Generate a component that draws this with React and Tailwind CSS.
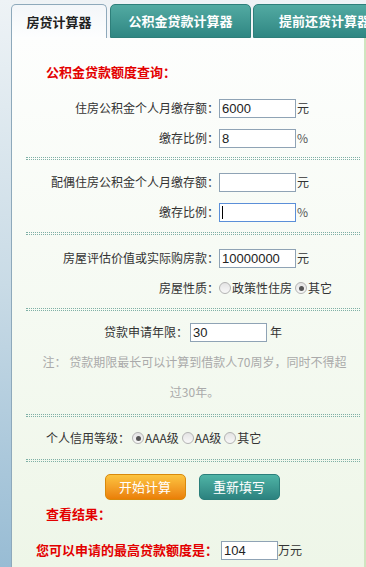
const FONT = { fontFamily: '"Noto Sans CJK SC", "Liberation Sans", sans-serif' };

function Box({ value, w = "w-[77px]", focused }) {
  return (
    <div
      className={`relative h-[19px] ${w} border bg-white px-[2px] text-[13px] leading-[17px] text-[#222] ${
        focused ? "border-[#5b8fd8]" : "border-[#8fa3b5]"
      }`}
      style={{ fontFamily: '"Liberation Sans", Arial, sans-serif' }}
    >
      {value}
      {focused && <span className="absolute left-[2px] top-[2px] h-[13px] w-px bg-black" />}
    </div>
  );
}

function Radio({ on }) {
  return (
    <span className="mr-[1px] inline-flex h-[12px] w-[12px] items-center justify-center rounded-full border border-[#b3b3b3] bg-gradient-to-b from-[#e4e4e4] to-[#f8f8f8]">
      {on && <span className="h-[5px] w-[5px] rounded-full bg-[#555]" />}
    </span>
  );
}

function Row({ label, children }) {
  return (
    <div className="flex h-[30px] items-center">
      <div className="w-[193px] text-right">{label}</div>
      <div className="flex items-center">{children}</div>
    </div>
  );
}

function Dots({ className = "" }) {
  return <div className={`h-[3px] border-y border-dotted border-[#7fb0a6] ${className}`} />;
}

export default function App() {
  return (
    <div className="flex h-[567px] w-[366px] overflow-hidden bg-white text-[12px] text-[#333]" style={FONT}>
      <div className="w-[11px] shrink-0 bg-gradient-to-b from-[#eef3f6] via-[#c9dbe6] to-[#98bcd4]" />
      <div className="flex w-[355px] shrink-0 flex-col">
        {/* tabs */}
        <div className="flex h-[38px] items-end bg-gradient-to-b from-[#eef2f5] to-[#f4f7f9] text-[13px] font-bold">
          <div className="flex h-[34px] w-[96px] shrink-0 items-center justify-center rounded-t-[5px] border border-b-0 border-[#8ea9bb] bg-gradient-to-b from-[#f3f6f9] to-[#fdfefe] text-[#222]">
            房贷计算器
          </div>
          <div className="ml-[3px] flex h-[34px] w-[141px] shrink-0 items-center justify-center rounded-t-[5px] border border-[#2e7f7a] bg-gradient-to-b from-[#52aaa2] to-[#2f8783] text-white">
            公积金贷款计算器
          </div>
          <div className="ml-[2px] flex h-[34px] w-[140px] shrink-0 items-center rounded-t-[5px] border border-[#2e7f7a] bg-gradient-to-b from-[#52aaa2] to-[#2f8783] pl-[25px] text-white whitespace-nowrap">
            提前还贷计算器
          </div>
        </div>

        {/* panel */}
        <div className="flex-1 border-l border-r-2 border-l-[#8ea9bb] border-r-[#cfe5c0] bg-gradient-to-b from-[#fdfefd] to-[#eef6e8] pl-[14px] pr-[4px] pt-[19px]">
          <div className="flex h-[30px] items-center pl-[20px] text-[13px] font-bold text-[#e30000]">
            公积金贷款额度查询：
          </div>
          <div className="mt-[6px]">
            <Row label="住房公积金个人月缴存额：">
              <Box value="6000" />
              <span className="ml-[1px]">元</span>
            </Row>
            <Row label="缴存比例：">
              <Box value="8" />
              <span className="ml-[1px] text-[#555]">%</span>
            </Row>
          </div>
          <Dots className="mt-[4px]" />

          <div className="mt-[7px]">
            <Row label="配偶住房公积金个人月缴存额：">
              <Box value="" />
              <span className="ml-[1px]">元</span>
            </Row>
            <Row label="缴存比例：">
              <Box value="" focused />
              <span className="ml-[1px] text-[#555]">%</span>
            </Row>
          </div>
          <Dots className="mt-[5px]" />

          <div className="mt-[8px]">
            <Row label="房屋评估价值或实际购房款：">
              <Box value="10000000" />
              <span className="ml-[1px]">元</span>
            </Row>
            <Row label="房屋性质：">
              <Radio />
              <span>政策性住房</span>
              <span className="ml-[3px]" />
              <Radio on />
              <span>其它</span>
            </Row>
          </div>
          <Dots className="mt-[5px]" />

          <div className="mt-[6px] flex h-[30px] items-center justify-center">
            <span>贷款申请年限：</span>
            <span className="ml-[2px]" />
            <Box value="30" />
            <span className="ml-[3px]">年</span>
          </div>
          <div className="whitespace-nowrap pl-[3px] text-center leading-[30px] text-[#aaa]">
            注： 贷款期限最长可以计算到借款人70周岁，同时不得超
            <br />
            过30年。
          </div>
          <Dots className="mt-[7px]" />

          <div className="mt-[6px] flex h-[30px] items-center pl-[20px]">
            <span>个人信用等级：</span>
            <span className="ml-[2px]" />
            <Radio on />
            <span>AAA级</span>
            <span className="ml-[3px]" />
            <Radio />
            <span>AA级</span>
            <span className="ml-[3px]" />
            <Radio />
            <span>其它</span>
          </div>
          <Dots className="mt-[6px]" />

          <div className="mt-[12px] flex justify-center gap-[13px] pr-[2px]">
            <button className="h-[26px] w-[81px] rounded-[5px] border border-[#d9890c] bg-gradient-to-b from-[#fcc43f] to-[#ea7f05] text-[13px] text-white">
              开始计算
            </button>
            <button className="h-[26px] w-[81px] rounded-[5px] border border-[#2b7f7b] bg-gradient-to-b from-[#4fb4a6] to-[#2c827f] text-[13px] text-white">
              重新填写
            </button>
          </div>
          <div className="flex h-[28px] items-center pl-[20px] text-[13px] font-bold text-[#e30000]">
            查看结果：
          </div>
          <div className="mt-[7px] flex h-[30px] items-center pl-[10px]">
            <span className="w-[185px] text-[13px] font-bold text-[#e30000] whitespace-nowrap">
              您可以申请的最高贷款额度是：
            </span>
            <Box value="104" w="w-[57px]" />
            <span>万元</span>
          </div>
        </div>
      </div>
    </div>
  );
}
